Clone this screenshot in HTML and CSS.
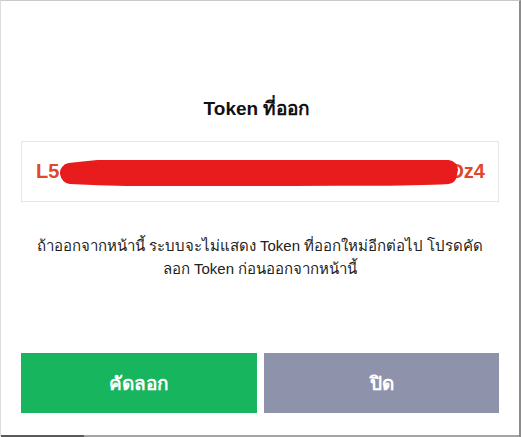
FILE: index.html
```html
<!DOCTYPE html>
<html lang="th">
<head>
<meta charset="utf-8">
<title>Token ที่ออก</title>
<link rel="stylesheet" href="styles.css">
</head>
<body>
<div class="window">
  <div class="dialog">
    <h1 class="title">Token ที่ออก</h1>
    <div class="token-box">
      <span class="token-start">L5</span>
      <span class="token-end">Dz4</span>
      <svg class="scribble" viewBox="0 0 400 26" width="400" height="26" aria-hidden="true">
        <path d="M10 13 C 60 6, 120 7, 200 9 C 260 10, 320 6, 388 10" stroke="#e81c1d" stroke-width="20" stroke-linecap="round" fill="none"/>
        <path d="M10 15 C 80 18, 160 19, 220 17 C 290 16, 340 18, 388 15" stroke="#e81c1d" stroke-width="18" stroke-linecap="round" fill="none"/>
      </svg>
    </div>
    <p class="message">ถ้าออกจากหน้านี้ ระบบจะไม่แสดง Token ที่ออกใหม่อีกต่อไป โปรดคัด<br>ลอก Token ก่อนออกจากหน้านี้</p>
    <div class="actions">
      <button class="btn btn-copy" type="button">คัดลอก</button>
      <button class="btn btn-close" type="button">ปิด</button>
    </div>
  </div>
  <div class="frame-bottom"></div>
</div>
</body>
</html>
```
FILE: styles.css
```css
html, body {
  margin: 0;
  padding: 0;
  background: #ffffff;
}

body {
  font-family: Tahoma, "Liberation Sans", "Noto Sans", sans-serif;
  color: #1a1a1a;
}

.window {
  width: 521px;
  height: 437px;
  box-sizing: border-box;
  border-top: 1px solid #c9c9c9;
  border-left: 1px solid #dcdcdc;
  border-right: 2px solid #8c8c8c;
  display: flex;
  flex-direction: column;
}

.dialog {
  flex: 1;
  padding: 96px 20px 0 20px;
  display: flex;
  flex-direction: column;
}

.title {
  margin: 0;
  font-size: 19px;
  line-height: 24px;
  font-weight: bold;
  text-align: center;
  color: #111;
  padding-right: 6px;
}

.token-box {
  position: relative;
  margin-top: 20px;
  height: 61px;
  box-sizing: border-box;
  border: 1px solid #e6e6e6;
  display: flex;
  align-items: center;
  justify-content: space-between;
  padding: 0 13px 1px 14px;
  font-size: 20px;
  font-weight: bold;
  color: #e0482b;
}

.scribble {
  position: absolute;
  left: 38px;
  top: 18px;
}

.message {
  margin: 32px 0 0 0;
  font-size: 15px;
  line-height: 23px;
  text-align: center;
  color: #222;
}

.actions {
  margin-top: 73px;
  display: grid;
  grid-template-columns: 236px 235px;
  column-gap: 7px;
}

.btn {
  height: 60px;
  border: none;
  margin: 0;
  font-family: inherit;
  font-size: 19px;
  font-weight: bold;
  color: #ffffff;
  cursor: pointer;
}

.btn-copy {
  background: #18b55f;
}

.btn-close {
  background: #8f92ab;
}

.frame-bottom {
  height: 2px;
  background: linear-gradient(to right, #5a5a5a 0, #5a5a5a 83px, #a3a3a3 83px, #a3a3a3 100%);
}
```
